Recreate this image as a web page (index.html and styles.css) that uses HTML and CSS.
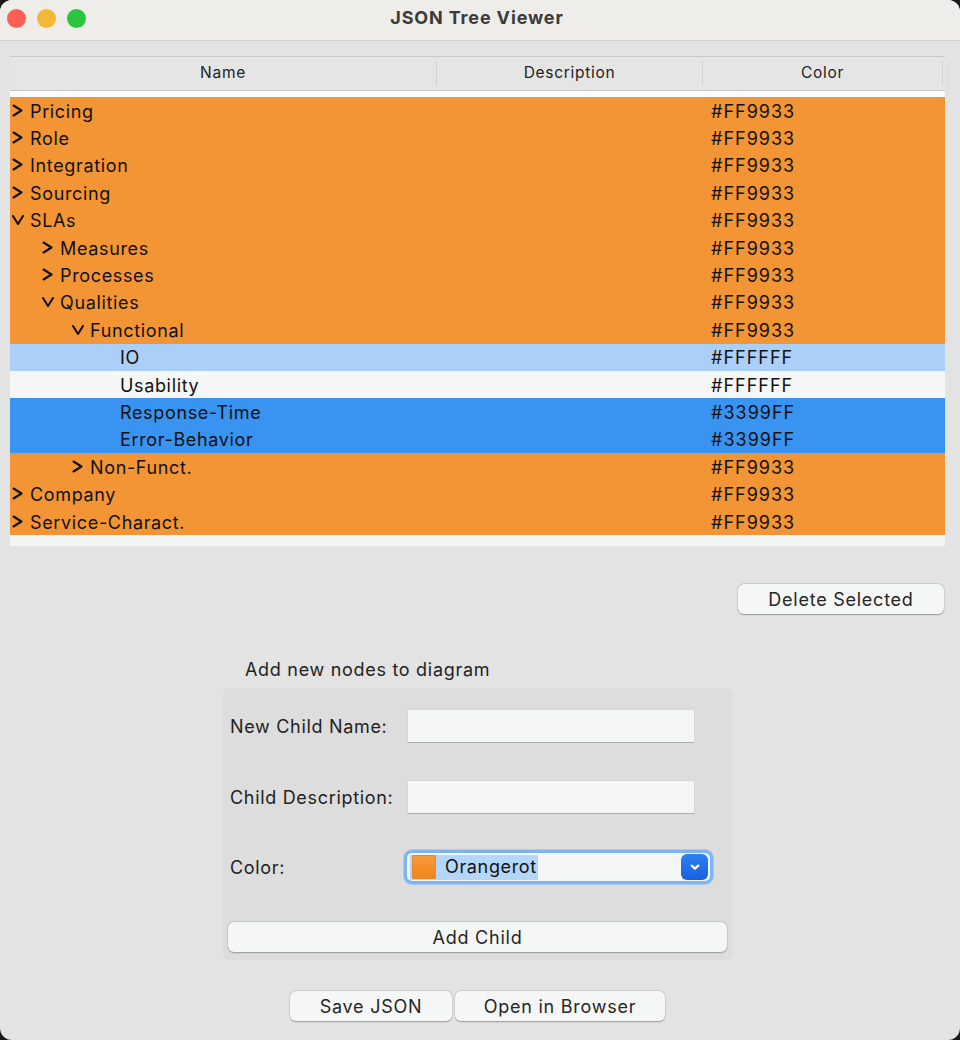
FILE: index.html
```html
<!DOCTYPE html>
<html>
<head>
<meta charset="utf-8">
<title>JSON Tree Viewer</title>
<link rel="stylesheet" href="styles.css">
</head>
<body>
<div class="window">
  <div class="titlebar">
    <div class="lights">
      <span class="light red"></span>
      <span class="light yellow"></span>
      <span class="light green"></span>
    </div>
    <div class="title">JSON Tree Viewer</div>
  </div>
  <div class="content">
    <div class="tree">
      <div class="thead">
        <div class="th c-name">Name</div>
        <div class="th c-desc">Description</div>
        <div class="th c-color">Color</div>
      </div>
      <div class="tbody">
        <div class="row orange"><div class="cell c-name lv0"><svg class="chev" viewBox="0 0 12 13"><polyline points="1.5,1.5 9.5,6.5 1.5,11.5"/></svg>Pricing</div><div class="cell c-desc"></div><div class="cell c-color">#FF9933</div></div>
        <div class="row orange"><div class="cell c-name lv0"><svg class="chev" viewBox="0 0 12 13"><polyline points="1.5,1.5 9.5,6.5 1.5,11.5"/></svg>Role</div><div class="cell c-desc"></div><div class="cell c-color">#FF9933</div></div>
        <div class="row orange"><div class="cell c-name lv0"><svg class="chev" viewBox="0 0 12 13"><polyline points="1.5,1.5 9.5,6.5 1.5,11.5"/></svg>Integration</div><div class="cell c-desc"></div><div class="cell c-color">#FF9933</div></div>
        <div class="row orange"><div class="cell c-name lv0"><svg class="chev" viewBox="0 0 12 13"><polyline points="1.5,1.5 9.5,6.5 1.5,11.5"/></svg>Sourcing</div><div class="cell c-desc"></div><div class="cell c-color">#FF9933</div></div>
        <div class="row orange"><div class="cell c-name lv0"><svg class="chev" viewBox="0 0 12 13"><polyline points="1,3 6,11 11,3"/></svg>SLAs</div><div class="cell c-desc"></div><div class="cell c-color">#FF9933</div></div>
        <div class="row orange"><div class="cell c-name lv1"><svg class="chev" viewBox="0 0 12 13"><polyline points="1.5,1.5 9.5,6.5 1.5,11.5"/></svg>Measures</div><div class="cell c-desc"></div><div class="cell c-color">#FF9933</div></div>
        <div class="row orange"><div class="cell c-name lv1"><svg class="chev" viewBox="0 0 12 13"><polyline points="1.5,1.5 9.5,6.5 1.5,11.5"/></svg>Processes</div><div class="cell c-desc"></div><div class="cell c-color">#FF9933</div></div>
        <div class="row orange"><div class="cell c-name lv1"><svg class="chev" viewBox="0 0 12 13"><polyline points="1,3 6,11 11,3"/></svg>Qualities</div><div class="cell c-desc"></div><div class="cell c-color">#FF9933</div></div>
        <div class="row orange"><div class="cell c-name lv2"><svg class="chev" viewBox="0 0 12 13"><polyline points="1,3 6,11 11,3"/></svg>Functional</div><div class="cell c-desc"></div><div class="cell c-color">#FF9933</div></div>
        <div class="row lightblue"><div class="cell c-name lv3"><span class="chev-space"></span>IO</div><div class="cell c-desc"></div><div class="cell c-color">#FFFFFF</div></div>
        <div class="row white"><div class="cell c-name lv3"><span class="chev-space"></span>Usability</div><div class="cell c-desc"></div><div class="cell c-color">#FFFFFF</div></div>
        <div class="row blue"><div class="cell c-name lv3"><span class="chev-space"></span>Response-Time</div><div class="cell c-desc"></div><div class="cell c-color">#3399FF</div></div>
        <div class="row blue"><div class="cell c-name lv3"><span class="chev-space"></span>Error-Behavior</div><div class="cell c-desc"></div><div class="cell c-color">#3399FF</div></div>
        <div class="row orange"><div class="cell c-name lv2"><svg class="chev" viewBox="0 0 12 13"><polyline points="1.5,1.5 9.5,6.5 1.5,11.5"/></svg>Non-Funct.</div><div class="cell c-desc"></div><div class="cell c-color">#FF9933</div></div>
        <div class="row orange"><div class="cell c-name lv0"><svg class="chev" viewBox="0 0 12 13"><polyline points="1.5,1.5 9.5,6.5 1.5,11.5"/></svg>Company</div><div class="cell c-desc"></div><div class="cell c-color">#FF9933</div></div>
        <div class="row orange"><div class="cell c-name lv0"><svg class="chev" viewBox="0 0 12 13"><polyline points="1.5,1.5 9.5,6.5 1.5,11.5"/></svg>Service-Charact.</div><div class="cell c-desc"></div><div class="cell c-color">#FF9933</div></div>
      </div>
    </div>

    <div class="actions">
      <button class="btn btn-delete">Delete Selected</button>
    </div>

    <div class="group">
      <div class="group-title">Add new nodes to diagram</div>
      <div class="group-frame">
        <div class="field">
          <label class="label">New Child Name:</label>
          <div class="input"></div>
        </div>
        <div class="field">
          <label class="label">Child Description:</label>
          <div class="input"></div>
        </div>
        <div class="field field-color">
          <label class="label">Color:</label>
          <div class="select">
            <span class="sel-value"><span class="swatch"></span><span class="sel-text">Orangerot</span></span>
            <span class="sel-btn"><svg viewBox="0 0 12 12"><polyline points="3.2,4.8 6,7.4 8.8,4.8"/></svg></span>
          </div>
        </div>
        <button class="btn btn-add">Add Child</button>
      </div>
    </div>

    <div class="bottom">
      <button class="btn btn-save">Save JSON</button>
      <button class="btn btn-open">Open in Browser</button>
    </div>
  </div>
</div>
</body>
</html>
```
FILE: styles.css
```css
html, body {
  margin: 0;
  padding: 0;
  background: #1a1a1a;
}
body {
  font-family: "Inter", "Liberation Sans", sans-serif;
  color: #111;
  letter-spacing: 0.65px;
}
.window {
  width: 960px;
  height: 1040px;
  background: #e3e3e3;
  border-radius: 12px;
  overflow: hidden;
  display: flex;
  flex-direction: column;
}
.titlebar {
  height: 40px;
  background: #efedea;
  border-bottom: 1px solid #d2d0ce;
  display: flex;
  align-items: center;
  position: relative;
  flex: none;
}
.lights {
  display: flex;
  gap: 11px;
  padding-left: 7px;
  padding-bottom: 3px;
}
.light {
  width: 19px;
  height: 19px;
  border-radius: 50%;
  display: block;
}
.red { background: #fd5f57; }
.yellow { background: #f4b836; }
.green { background: #2bc640; }
.title {
  position: absolute;
  left: 0;
  right: 0;
  top: 6px;
  text-align: center;
  font-weight: 700;
  font-size: 18px;
  line-height: 24px;
  color: #3b3b3b;
  letter-spacing: 0.85px;
  padding-right: 6px;
}
.content {
  padding: 15px 15px 0 10px;
  display: flex;
  flex-direction: column;
}
.tree {
  width: 935px;
  background: #f3f4f4;
  padding-bottom: 11px;
}
.thead {
  display: flex;
  height: 33px;
  background: #e5e5e5;
  border-top: 1px solid #c9c9c9;
  border-bottom: 1px solid #c4c4c4;
  align-items: center;
}
.th {
  font-size: 15.5px;
  color: #222;
  text-align: center;
  height: 25px;
  line-height: 24px;
  box-sizing: border-box;
  letter-spacing: 0.7px;
}
.thead .c-name, .thead .c-desc {
  border-right: 1px solid #d2d2d2;
}
.thead .c-color {
  border-right: 1px solid #d2d2d2;
  width: 240px;
}
.c-name { width: 427px; flex: none; }
.c-desc { width: 266px; flex: none; }
.c-color { width: 242px; flex: none; }
.tbody {
  border-top: 6px solid #fbfbfb;
}
.row {
  display: flex;
  height: 27.4px;
  align-items: center;
  font-size: 18px;
  padding-top: 1px;
  box-sizing: border-box;
}
.orange { background: #f39435; }
.lightblue { background: #abcff6; }
.white { background: #f5f6f6; }
.blue { background: #3893f1; }
.cell {
  display: flex;
  align-items: center;
  white-space: nowrap;
  box-sizing: border-box;
}
.row .c-color {
  padding-left: 8px;
  letter-spacing: 1px;
}
.lv0 { padding-left: 2px; }
.lv1 { padding-left: 32px; }
.lv2 { padding-left: 62px; }
.lv3 { padding-left: 92px; }
.chev {
  width: 12px;
  height: 13px;
  margin-right: 6px;
  margin-top: -2px;
  fill: none;
  stroke: #111;
  stroke-width: 2.1;
  stroke-linecap: round;
  stroke-linejoin: round;
  flex: none;
}
.chev-space {
  width: 18px;
  flex: none;
}
.btn {
  font-family: "Inter", "Liberation Sans", sans-serif;
  font-size: 18px;
  letter-spacing: 0.75px;
  color: #262626;
  background: #f5f6f6;
  border: none;
  border-radius: 6px;
  box-shadow: 0 0.5px 1.5px rgba(0,0,0,0.3), 0 0 0 0.5px rgba(0,0,0,0.08);
  height: 30px;
  padding: 0;
  cursor: default;
}
.actions {
  display: flex;
  justify-content: flex-end;
  margin-top: 38px;
  width: 935px;
}
.btn-delete {
  width: 206px;
  margin-right: 1px;
}
.group {
  width: 509px;
  align-self: flex-start;
  margin-left: 213px;
  margin-top: 44px;
}
.group-title {
  font-size: 18px;
  color: #222;
  padding-left: 22px;
  height: 30px;
  line-height: 24px;
  letter-spacing: 0.7px;
}
.group-frame {
  background: #dddddd;
  border-radius: 6px;
  padding: 22px 5px 7px 5px;
  height: 272px;
  box-sizing: border-box;
  display: flex;
  flex-direction: column;
}
.field {
  display: flex;
  align-items: center;
  height: 32px;
  margin-bottom: 39px;
}
.label {
  font-size: 18px;
  color: #222;
  width: 180px;
  padding-left: 2px;
  box-sizing: border-box;
  flex: none;
  letter-spacing: 0.68px;
}
.input {
  width: 286px;
  height: 32px;
  background: #f4f5f5;
  box-shadow: 0 1px 0.5px rgba(0,0,0,0.2), 0 0 0 0.5px rgba(0,0,0,0.05);
}
.field-color {
  height: 34px;
  margin-bottom: 39px;
  margin-top: -2px;
}
.select {
  margin-left: -1px;
  width: 298px;
  height: 28px;
  background: #f4f5f5;
  border-radius: 5px;
  box-shadow: 0 0 0 3px #80b3f1, 0 0 0 4px #a9caf2;
  display: flex;
  align-items: center;
  padding: 0 2px 0 3px;
  box-sizing: content-box;
}
.sel-value {
  display: flex;
  align-items: center;
  background: #b4d6fa;
  height: 25px;
  padding: 0 1px 0 2px;
}
.swatch {
  width: 24px;
  height: 24px;
  background: linear-gradient(#f59a3a, #f0841c);
  border: 1px solid #e6892a;
  box-sizing: border-box;
  border-radius: 1px;
  flex: none;
}
.sel-text {
  margin-left: 9px;
  font-size: 18px;
  line-height: 24px;
  color: #111;
}
.sel-btn {
  margin-left: auto;
  width: 27px;
  height: 26px;
  border-radius: 6px;
  background: linear-gradient(#2d80f4, #1761dd);
  display: flex;
  align-items: center;
  justify-content: center;
}
.sel-btn svg {
  width: 14px;
  height: 14px;
  fill: none;
  stroke: #fff;
  stroke-width: 1.9;
  stroke-linecap: round;
  stroke-linejoin: round;
}
.btn-add {
  width: 499px;
  margin-top: -1px;
}
.bottom {
  display: flex;
  justify-content: center;
  gap: 3px;
  width: 935px;
  margin-top: 31px;
}
.btn-save { width: 162px; }
.btn-open { width: 210px; }
```
